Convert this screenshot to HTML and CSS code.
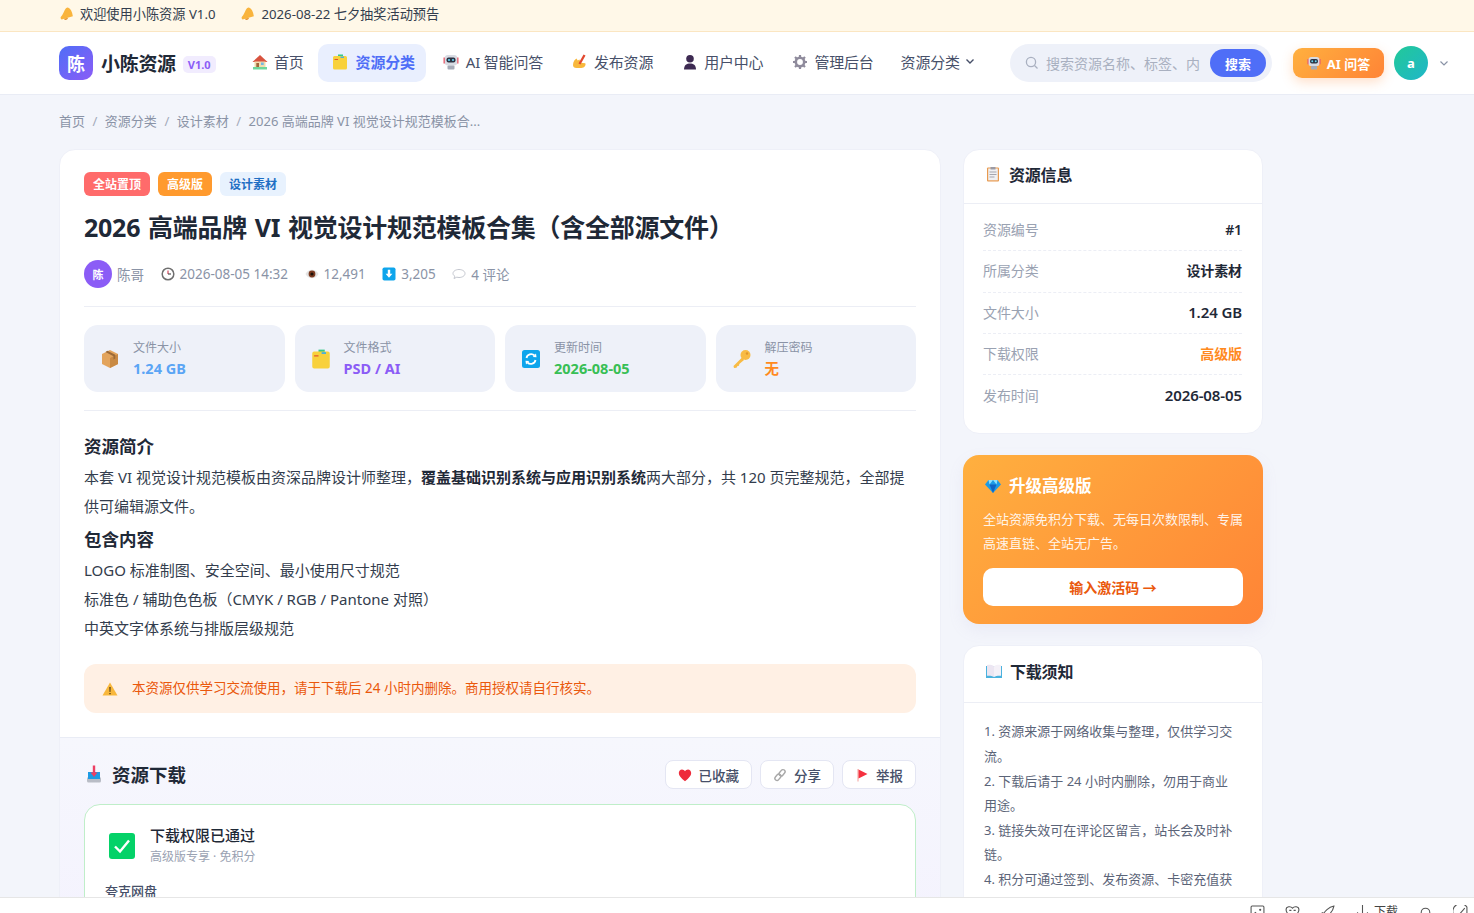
FILE: index.html
```html
<!DOCTYPE html>
<html lang="zh-CN">
<head>
    <meta charset="UTF-8">
    <meta name="viewport" content="width=device-width, initial-scale=1.0">
    <title>2026 高端品牌 VI 视觉设计规范模板合集 - 小陈资源</title>
    <link rel="stylesheet" href="styles.css">
</head>
<body>
    <svg class="sprite" aria-hidden="true">
        <symbol id="i-bell" viewBox="0 0 16 16">
            <path d="M9.500.8c2.600 1 4.400 4.400 5.200 9.800L1.800 14.200c-1.200-1.100-1.500-2.100-.7-3.100 2.200-1.900 2.900-4.900 4.200-7.300C6.200 2 7.800.2 9.500.8z" fill="#f9b43c"/>
            <path d="M4.500 13.500c.7 2.100 3.700 2.100 4.800-1.100z" fill="#e8942a"/>
        </symbol>
        <symbol id="i-folder" viewBox="0 0 16 16">
            <path d="M6 .5h5v3H6z" fill="#35c98a"/>
            <path d="M2.500 2h11A1.500 1.500 0 0 1 15 3.500v10.500a1.500 1.500 0 0 1-1.500 1.500h-11A1.500 1.500 0 0 1 1 14V3.500A1.500 1.500 0 0 1 2.500 2z" fill="#f8d13c"/>
            <path d="M2.500 5h3.500v1H2.500z" fill="#e2562f"/>
            <path d="M8.500 2.500h3.500v1.500H8.500z" fill="#4cb0d8"/>
        </symbol>
        <symbol id="i-robot" viewBox="0 0 16 16">
            <path d="M.5 3.500h2v6h-2zM13.500 3.500h2v6h-2z" fill="#e8596a"/>
            <rect x="1.800" y="1" width="12.400" height="10.500" rx="3" fill="#d8dbe3"/>
            <rect x="3.500" y="3.500" width="9" height="5" rx="2" fill="#2c3444"/>
            <circle cx="6" cy="6" r="1.100" fill="#67d4f2"/><circle cx="10" cy="6" r="1.100" fill="#67d4f2"/>
            <rect x="4.500" y="11.500" width="7" height="4" rx="1" fill="#a6abb8"/>
        </symbol>
    </svg>

    <div class="notice-bar">
        <span class="notice-item"><svg class="ico ico-14"><use href="#i-bell"/></svg>欢迎使用小陈资源 V1.0</span>
        <span class="notice-item"><svg class="ico ico-14"><use href="#i-bell"/></svg>2026-08-22 七夕抽奖活动预告</span>
    </div>

    <header class="site-header">
        <a class="brand">
            <span class="brand-logo">陈</span>
            <span class="brand-name">小陈资源</span>
            <span class="brand-version">V1.0</span>
        </a>
        <nav class="nav">
            <a class="nav-link">
                <svg class="ico" viewBox="0 0 16 16"><path d="M8 1 .5 8h15z" fill="#d8533f"/><path d="M2.500 7.500h11V13h-11z" fill="#f2dcae"/><path d="M1 13h14v2.500H1z" fill="#6fd69a"/><path d="M4.300 9h2.700v4H4.300z" fill="#a0683a"/><path d="M9 8.500h2.700V11H9z" fill="#74b8e0"/></svg>
                首页
            </a>
            <a class="nav-link active"><svg class="ico"><use href="#i-folder"/></svg>资源分类</a>
            <a class="nav-link nav-ai"><svg class="ico"><use href="#i-robot"/></svg>AI 智能问答</a>
            <a class="nav-link">
                <svg class="ico" viewBox="0 0 16 16"><path d="M1 11c0-3.500 1.800-5.500 3.500-6.500l1.200 2 1.800-1 1 3.200 4.800.6c.9 1.800-.7 4.700-4 4.700H4.500C2.200 14 1 13 1 11z" fill="#f8b83c"/><path d="M6.500 9.500 11.500.5l2 1L8.500 10.500z" fill="#e2482f"/></svg>
                发布资源
            </a>
            <a class="nav-link">
                <svg class="ico" viewBox="0 0 16 16"><circle cx="8" cy="4.800" r="3.800" fill="#3d2a52"/><path d="M2 15.500c0-4.500 2.800-6 6-6s6 1.500 6 6z" fill="#3d2a52"/></svg>
                用户中心
            </a>
            <a class="nav-link">
                <svg class="ico" viewBox="0 0 16 16"><circle cx="8" cy="8" r="4.200" fill="none" stroke="#8f8b9c" stroke-width="2.600"/><path d="M8 1v2.500M8 12.500V15M1 8h2.500M12.500 8H15M3 3l1.800 1.800M11.200 11.200 13 13M13 3l-1.800 1.800M4.800 11.200 3 13" stroke="#8f8b9c" stroke-width="2.200"/></svg>
                管理后台
            </a>
            <a class="nav-link nav-more">资源分类<svg class="chevron" viewBox="0 0 10 10"><path d="M1.500 3.500 5 7l3.500-3.500" fill="none" stroke="#475069" stroke-width="1.400"/></svg></a>
        </nav>
        <form class="search">
            <svg class="search-icon" viewBox="0 0 14 14"><circle cx="6" cy="6" r="4.600" fill="none" stroke="#a9b0c0" stroke-width="1.300"/><path d="m9.500 9.500 3 3" stroke="#a9b0c0" stroke-width="1.300"/></svg>
            <input class="search-input" type="text" placeholder="搜索资源名称、标签、内容">
            <button class="search-btn" type="button">搜索</button>
        </form>
        <a class="ai-btn"><svg class="ico ico-14"><use href="#i-robot"/></svg>AI 问答</a>
        <span class="avatar">a</span>
        <svg class="chevron user-chevron" viewBox="0 0 10 10"><path d="M1.500 3.500 5 7l3.500-3.500" fill="none" stroke="#8a93a6" stroke-width="1.200"/></svg>
    </header>

    <div class="page">
        <div class="crumbs">
            <a>首页</a><i>/</i><a>资源分类</a><i>/</i><a>设计素材</a><i>/</i><span>2026 高端品牌 VI 视觉设计规范模板合...</span>
        </div>

        <div class="layout">
            <main class="card article">
                <div class="article-body">
                    <div class="tags">
                        <span class="tag tag-red">全站置顶</span>
                        <span class="tag tag-orange">高级版</span>
                        <span class="tag tag-blue">设计素材</span>
                    </div>
                    <h1 class="title">2026 高端品牌 VI 视觉设计规范模板合集（含全部源文件）</h1>
                    <div class="meta">
                        <span class="meta-item author"><span class="author-avatar">陈</span>陈哥</span>
                        <span class="meta-item">
                            <svg class="ico ico-14" viewBox="0 0 14 14"><circle cx="7" cy="7" r="5.800" fill="#fff" stroke="#6f6f6f" stroke-width="1.500"/><path d="M7 3.500V7" stroke="#d0374f" stroke-width="1.100"/><path d="M7 7h3" stroke="#444" stroke-width="1.100"/></svg>
                            2026-08-05 14:32
                        </span>
                        <span class="meta-item">
                            <svg class="ico ico-14" viewBox="0 0 14 14"><path d="M.5 7C2 4 4.500 2.800 7 2.800S12 4 13.500 7C12 10 9.500 11.200 7 11.200S2 10 .5 7z" fill="#e4e4e4"/><circle cx="7" cy="7" r="3.400" fill="#7a3a20"/><circle cx="7" cy="7" r="1.600" fill="#1c1008"/></svg>
                            12,491
                        </span>
                        <span class="meta-item">
                            <svg class="ico ico-14" viewBox="0 0 14 14"><rect x=".5" y=".5" width="13" height="13" rx="1.800" fill="#0ea5ec"/><path d="M5.800 2.800h2.400v4h2.200L7 10.800 3.600 6.800h2.200z" fill="#fff"/></svg>
                            3,205
                        </span>
                        <span class="meta-item">
                            <svg class="ico ico-14" viewBox="0 0 14 14"><path d="M7 2.500c3.300 0 6 1.700 6 4s-2.700 4-6 4c-.8 0-1.500-.1-2.200-.3L2 11.500l.8-2.300C1.700 8.500 1 7.600 1 6.500c0-2.300 2.700-4 6-4z" fill="#fff" stroke="#c4c7cf"/></svg>
                            4 评论
                        </span>
                    </div>

                    <div class="stats">
                        <div class="stat">
                            <svg class="stat-icon" viewBox="0 0 20 20"><path d="M10 1 18 5v10l-8 4-8-4V5z" fill="#e3a45c"/><path d="M10 9 18 5v10l-8 4z" fill="#c98a44"/><path d="m5.500 3 8 4.200v3.300l1.800-.9V5.700l-8-4z" fill="#9c6a38"/></svg>
                            <div><div class="stat-label">文件大小</div><div class="stat-value c-blue">1.24 GB</div></div>
                        </div>
                        <div class="stat">
                            <svg class="stat-icon"><use href="#i-folder"/></svg>
                            <div><div class="stat-label">文件格式</div><div class="stat-value c-purple">PSD / AI</div></div>
                        </div>
                        <div class="stat">
                            <svg class="stat-icon" viewBox="0 0 20 20"><rect x="1" y="1" width="18" height="18" rx="2.500" fill="#0ea5ec"/><path d="M5.500 9A4.700 4.700 0 0 1 13.500 6.500M14.500 11a4.700 4.700 0 0 1-8 2.500" fill="none" stroke="#fff" stroke-width="1.800"/><path d="m11.800 8 3.700.2-.5-3.700zM8.200 12l-3.700-.2.500 3.700z" fill="#fff"/></svg>
                            <div><div class="stat-label">更新时间</div><div class="stat-value c-green">2026-08-05</div></div>
                        </div>
                        <div class="stat">
                            <svg class="stat-icon" viewBox="0 0 20 20"><circle cx="13.500" cy="6" r="5" fill="#f8bb45"/><circle cx="15" cy="4.500" r="1.200" fill="#e0952b"/><path d="M10.500 8 1.500 17l.5 2 2.500-.3 1-1.700 1.500-.3.300-1.700L12 11z" fill="#f8bb45"/></svg>
                            <div><div class="stat-label">解压密码</div><div class="stat-value c-orange">无</div></div>
                        </div>
                    </div>

                    <div class="content">
                        <h2>资源简介</h2>
                        <p>本套 VI 视觉设计规范模板由资深品牌设计师整理，<strong>覆盖基础识别系统与应用识别系统</strong>两大部分，共 120 页完整规范，全部提供可编辑源文件。</p>
                        <h2>包含内容</h2>
                        <p>LOGO 标准制图、安全空间、最小使用尺寸规范</p>
                        <p>标准色 / 辅助色色板（CMYK / RGB / Pantone 对照）</p>
                        <p>中英文字体系统与排版层级规范</p>
                    </div>

                    <div class="warning">
                        <svg class="ico" viewBox="0 0 16 16"><path d="M8 1.500 15.500 14.500H.5z" fill="#f8b73c"/><path d="M7.400 6h1.200l-.2 5h-.8zM7.400 12h1.200v1.200H7.400z" fill="#3a2a10"/></svg>
                        本资源仅供学习交流使用，请于下载后 24 小时内删除。商用授权请自行核实。
                    </div>
                </div>

                <section class="download">
                    <div class="download-head">
                        <h2 class="download-title">
                            <svg class="ico ico-18" viewBox="0 0 18 18"><rect x="2" y="12" width="14" height="5.500" rx="1.500" fill="#b9bdc6"/><path d="M3 7h12v7H3z" fill="#1d9be4"/><path d="M7.800.5h2.400v7h2.300L9 12 5.500 7.500h2.300z" fill="#ec3f63"/></svg>
                            资源下载
                        </h2>
                        <div class="actions">
                            <button class="action-btn"><svg class="ico ico-14" viewBox="0 0 14 14"><path d="M7 13.300C2.800 10 .8 7.700.8 5.100.8 3 2.300 1.500 4 1.500c1.300 0 2.300.7 3 1.800.7-1.100 1.700-1.800 3-1.800 1.700 0 3.200 1.500 3.200 3.600 0 2.600-2 4.900-6.200 8.200z" fill="#ee2b3b"/></svg>已收藏</button>
                            <button class="action-btn"><svg class="ico ico-14" viewBox="0 0 14 14"><g fill="none" stroke="#a8a8a8" stroke-width="1.400"><rect x="7" y="1.200" width="4.200" height="7" rx="2.100" transform="rotate(40 9 4.700)"/><rect x="2.800" y="5.800" width="4.200" height="7" rx="2.100" transform="rotate(40 5 9.300)"/></g></svg>分享</button>
                            <button class="action-btn"><svg class="ico ico-14" viewBox="0 0 14 14"><path d="M2.500 1h1v12.500h-1z" fill="#f4a09a"/><path d="M3.500 1.500 12.500 6l-9 4.500z" fill="#f5313f"/></svg>举报</button>
                        </div>
                    </div>
                    <div class="permit">
                        <div class="permit-head">
                            <svg class="permit-icon" viewBox="0 0 26 26"><rect width="26" height="26" rx="3" fill="#04d268"/><path d="m6 13.500 5 5 9-11" fill="none" stroke="#fff" stroke-width="2.400"/></svg>
                            <div>
                                <div class="permit-title">下载权限已通过</div>
                                <div class="permit-sub">高级版专享 · 免积分</div>
                            </div>
                        </div>
                        <div class="disk-name">夸克网盘</div>
                    </div>
                </section>
            </main>

            <aside class="sidebar">
                <section class="card">
                    <h3 class="side-title">
                        <svg class="ico" viewBox="0 0 16 16"><rect x="2" y="1.500" width="12" height="14" rx="1" fill="#e89a50"/><rect x="3.200" y="2.500" width="9.600" height="11.800" fill="#f0f0f2"/><path d="M5.500 1h5v2.500h-5z" fill="#9b9ba5"/><path d="M4.500 6h7M4.500 8.500h7M4.500 11h5" stroke="#a5a5ad"/></svg>
                        资源信息
                    </h3>
                    <div class="info-list">
                        <div class="info-row"><span>资源编号</span><b>#1</b></div>
                        <div class="info-row"><span>所属分类</span><b>设计素材</b></div>
                        <div class="info-row"><span>文件大小</span><b class="num">1.24 GB</b></div>
                        <div class="info-row"><span>下载权限</span><b class="c-orange">高级版</b></div>
                        <div class="info-row"><span>发布时间</span><b class="num">2026-08-05</b></div>
                    </div>
                </section>

                <section class="upgrade">
                    <h3 class="upgrade-title">
                        <svg class="ico ico-18" viewBox="0 0 18 18"><path d="M4.500 3h9L17 7.500 9 16 1 7.500z" fill="#1c9be6"/><path d="M5.500 7.500h7L9 16z" fill="#0f63c4"/><path d="M4.500 3 5.500 7.500 9 3zM13.500 3 12.500 7.500 9 3z" fill="#8fe0fa"/></svg>
                        升级高级版
                    </h3>
                    <p class="upgrade-text">全站资源免积分下载、无每日次数限制、专属高速直链、全站无广告。</p>
                    <a class="upgrade-btn">输入激活码 →</a>
                </section>

                <section class="card">
                    <h3 class="side-title side-title-tall">
                        <svg class="ico ico-18" viewBox="0 0 18 18"><path d="M1 4h16v12H1z" fill="#4bb2de"/><path d="M2 3c2.500-.5 5 0 7 1.200V15c-2-1.200-4.500-1.600-7-1.200z" fill="#ece6f2"/><path d="M16 3c-2.500-.5-5 0-7 1.200V15c2-1.200 4.500-1.600 7-1.200z" fill="#f5f1f8"/></svg>
                        下载须知
                    </h3>
                    <ol class="rules">
                        <li>1. 资源来源于网络收集与整理，仅供学习交流。</li>
                        <li>2. 下载后请于 24 小时内删除，勿用于商业用途。</li>
                        <li>3. 链接失效可在评论区留言，站长会及时补链。</li>
                        <li>4. 积分可通过签到、发布资源、卡密充值获取。</li>
                    </ol>
                </section>
            </aside>
        </div>
    </div>

    <div class="bottom-bar">
        <svg class="bar-icon" viewBox="0 0 14 14"><rect x="1" y="1" width="12" height="12" rx="1" fill="none" stroke="#555"/><circle cx="9.500" cy="4.500" r="1" fill="#555"/><path d="m2 10 3-3 3 3" fill="none" stroke="#555"/></svg>
        <svg class="bar-icon" viewBox="0 0 14 14"><path d="M7 3C5.500 1 1 1 1 4.500 1 7.500 4 10 7 13c3-3 6-5.500 6-8.500C13 1 8.500 1 7 3zM4 5h2M8 5h2" fill="none" stroke="#555"/></svg>
        <svg class="bar-icon" viewBox="0 0 14 14"><path d="M13 1C8 2 4 6 3 9l2 2c3-1 7-5 8-10zM1 8l2-1M6 13l1-2" fill="none" stroke="#555"/></svg>
        <span class="bar-download"><svg class="bar-icon" viewBox="0 0 14 14"><path d="M7 0v11M2 7l5 5 5-5" fill="none" stroke="#555"/></svg>下载</span>
        <svg class="bar-icon" viewBox="0 0 14 14"><path d="M3 7a4 4 0 0 1 8 0v2H3zM1 9h12M2 12h10" fill="none" stroke="#555"/></svg>
        <svg class="bar-icon" viewBox="0 0 14 14"><path d="M1 10a6 6 0 0 1 12-8v11H1zM3 12 11 3" fill="none" stroke="#555"/></svg>
    </div>
</body>
</html>
```

FILE: styles.css
```css
* {
    margin: 0;
    padding: 0;
    box-sizing: border-box;
}

html, body {
    height: 100%;
    overflow: hidden;
}

body {
    background: #f3f5fb;
    color: #1f2937;
    font-family: "Noto Sans", "Noto Sans CJK SC", sans-serif;
    font-size: 14px;
}

.sprite {
    position: absolute;
    width: 0;
    height: 0;
}

.ico {
    width: 16px;
    height: 16px;
    flex: none;
}

.ico-14 {
    width: 14px;
    height: 14px;
}

.ico-18 {
    width: 18px;
    height: 18px;
}

/* top notice */
.notice-bar {
    height: 32px;
    padding: 0 0 4px 60px;
    display: flex;
    align-items: center;
    gap: 26px;
    background: #fff8e8;
    border-bottom: 1px solid #fbe6c2;
    font-size: 13.2px;
    color: #333d4d;
}

.notice-item {
    display: flex;
    align-items: center;
    gap: 6px;
}

/* header */
.site-header {
    height: 63px;
    padding-left: 59px;
    display: flex;
    align-items: center;
    background: #fff;
    border-bottom: 1px solid #e9ecf5;
}

.brand {
    display: flex;
    align-items: center;
    width: 179px;
    flex: none;
}

.brand-logo {
    width: 34px;
    height: 34px;
    margin-right: 8px;
    display: flex;
    align-items: center;
    justify-content: center;
    border-radius: 10px;
    background: linear-gradient(135deg, #4f6ef7, #8b5cf6);
    color: #fff;
    font-size: 18px;
    font-weight: 700;
}

.brand-name {
    font-size: 19px;
    font-weight: 700;
    color: #1f2937;
    letter-spacing: -0.3px;
}

.brand-version {
    margin: 3px 0 0 7px;
    padding: 0 5px;
    height: 17px;
    line-height: 17px;
    border-radius: 5px;
    background: #f1ecfe;
    color: #8b5cf6;
    font-size: 11px;
    font-weight: 700;
}

.nav {
    display: flex;
    align-items: center;
    gap: 3px;
    width: 772px;
    flex: none;
}

.nav-link {
    height: 38px;
    padding: 0 12px 4px;
    display: flex;
    align-items: center;
    gap: 4px;
    border-radius: 10px;
    color: #475069;
    font-size: 15px;
    letter-spacing: -0.2px;
    white-space: nowrap;
}

.nav-link .ico {
    margin: 2px 2px 0;
}

.nav-link.active {
    margin-left: -1px;
    padding-right: 11px;
    gap: 6px;
    background: #e9effe;
    color: #4f6ef7;
    font-weight: 600;
}

.nav-ai {
    gap: 5px;
}

.chevron {
    width: 10px;
    height: 10px;
    flex: none;
}

.nav-more {
    gap: 5px;
}

.search {
    width: 262px;
    height: 38px;
    padding: 0 6px 0 15px;
    display: flex;
    align-items: center;
    border-radius: 19px;
    background: #eef1f9;
    flex: none;
}

.search-icon {
    width: 14px;
    height: 14px;
    margin-right: 7px;
    flex: none;
}

.search-input {
    width: 154px;
    border: none;
    outline: none;
    background: transparent;
    font-family: inherit;
    font-size: 14px;
    margin-right: 10px;
}

.search-input::placeholder {
    color: #a9b0c0;
}

.search-btn {
    width: 56px;
    height: 28px;
    border: none;
    border-radius: 14px;
    background: #4f6ef7;
    color: #fff;
    font-family: inherit;
    font-size: 13px;
    font-weight: 700;
    flex: none;
}

.ai-btn {
    width: 91px;
    height: 30px;
    margin-left: 21px;
    display: flex;
    align-items: center;
    justify-content: center;
    gap: 6px;
    border-radius: 9px;
    background: linear-gradient(135deg, #ffb03f, #ff8436);
    box-shadow: 0 4px 12px rgba(255, 140, 60, 0.28);
    color: #fff;
    font-size: 13px;
    font-weight: 700;
    flex: none;
}

.avatar {
    width: 34px;
    height: 34px;
    margin-left: 10px;
    display: flex;
    align-items: center;
    justify-content: center;
    border-radius: 50%;
    background: linear-gradient(135deg, #22c998, #1fb6c9);
    color: #fff;
    font-size: 13px;
    font-weight: 700;
    flex: none;
}

.user-chevron {
    margin-left: 11px;
}

/* page */
.page {
    padding: 0 59px;
}

.crumbs {
    height: 54px;
    padding-bottom: 3px;
    display: flex;
    align-items: center;
    gap: 7.5px;
    color: #8a93a6;
    font-size: 13px;
}

.crumbs i {
    font-style: normal;
    color: #a3aaba;
}

.layout {
    width: 1204px;
    display: grid;
    grid-template-columns: 882px 300px;
    gap: 22px;
    align-items: start;
}

.card {
    background: #fff;
    border: 1px solid #eef0f8;
    border-radius: 16px;
    overflow: hidden;
}

.article-body {
    padding: 22px 24px 24px;
}

/* tags and title */
.tags {
    display: flex;
    gap: 8px;
}

.tag {
    height: 24px;
    padding: 0 9px;
    display: flex;
    align-items: center;
    border-radius: 6px;
    font-size: 12px;
    font-weight: 700;
}

.tag-red {
    background: #ff6b6b;
    color: #fff;
}

.tag-orange {
    background: #ff9a2e;
    color: #fff;
}

.tag-blue {
    background: #e8f2fe;
    color: #1f6fc4;
}

.title {
    margin-top: 13px;
    font-size: 25px;
    line-height: 36px;
    font-weight: 700;
    color: #1f2937;
    letter-spacing: -0.25px;
    word-spacing: 1.5px;
    white-space: nowrap;
}

.meta {
    margin-top: 15px;
    padding-bottom: 18px;
    display: flex;
    align-items: center;
    gap: 16.5px;
    color: #8a93a6;
    font-size: 13.5px;
    border-bottom: 1px solid #eceef5;
}

.meta-item {
    display: flex;
    align-items: center;
    gap: 5px;
}

.author-avatar {
    width: 28px;
    height: 28px;
    display: flex;
    align-items: center;
    justify-content: center;
    border-radius: 50%;
    background: #8b5cf6;
    color: #fff;
    font-size: 11px;
    font-weight: 700;
}

/* stats */
.stats {
    padding: 18px 0;
    display: grid;
    grid-template-columns: repeat(4, 1fr);
    gap: 10px;
    border-bottom: 1px solid #eceef5;
}

.stat {
    height: 67px;
    padding-left: 16px;
    display: flex;
    align-items: center;
    gap: 13px;
    border-radius: 14px;
    background: #eef1f9;
}

.stat-icon {
    width: 20px;
    height: 20px;
    flex: none;
}

.stat-label {
    color: #8a93a6;
    font-size: 12px;
    line-height: 18px;
}

.stat-value {
    margin-top: 2px;
    font-size: 14.5px;
    line-height: 19px;
    font-weight: 700;
}

.c-blue {
    color: #5aa5f5;
}

.c-purple {
    color: #8b5cf6;
}

.c-green {
    color: #38bf55;
}

.c-orange {
    color: #ff8a1e;
}

/* body text */
.content {
    margin-top: 20px;
    font-size: 15px;
    line-height: 29px;
    color: #333d4d;
}

.content h2 {
    font-size: 17.5px;
    line-height: 31px;
    padding-bottom: 1px;
    font-weight: 700;
    color: #1f2937;
}

.content p + h2 {
    margin-top: 3px;
}

.content strong {
    color: #1f2937;
}

.warning {
    height: 49px;
    margin-top: 21px;
    padding: 0 0 3px 18px;
    display: flex;
    align-items: center;
    gap: 14px;
    border-radius: 12px;
    background: #fff0e4;
    color: #ea580c;
    font-size: 13.5px;
}

.warning .ico {
    margin-top: 3px;
}

/* download */
.download {
    padding: 22px 24px 24px;
    background: linear-gradient(180deg, #f6f7fd, #f4f2fe);
    border-top: 1px solid #e9ecf5;
}

.download-head {
    display: flex;
    align-items: center;
    justify-content: space-between;
}

.download-title {
    padding-bottom: 2px;
    display: flex;
    align-items: center;
    gap: 9px;
    font-size: 18.5px;
    font-weight: 700;
    color: #1f2937;
}

.download-title .ico {
    margin-left: 1px;
}

.actions {
    display: flex;
    gap: 8px;
}

.action-btn {
    height: 29px;
    padding: 0 12px;
    display: flex;
    align-items: center;
    gap: 7px;
    border: 1px solid #e4e6f3;
    border-radius: 8px;
    background: #fff;
    color: #475069;
    font-family: inherit;
    font-size: 13.5px;
    font-weight: 500;
}

.permit {
    margin-top: 15px;
    padding: 20px;
    background: #fff;
    border: 1px solid #bfeec9;
    border-radius: 16px;
}

.permit-head {
    padding-left: 4px;
    display: flex;
    align-items: center;
    gap: 15px;
}

.permit-icon {
    width: 26px;
    height: 26px;
    flex: none;
}

.permit-title {
    font-size: 15px;
    line-height: 20px;
    font-weight: 500;
    color: #1f2937;
}

.permit-sub {
    margin-top: 3px;
    font-size: 12px;
    line-height: 18px;
    color: #9aa2b2;
}

.disk-name {
    margin-top: 15px;
    font-size: 13px;
    line-height: 20px;
    font-weight: 500;
    color: #475069;
}

/* sidebar */
.sidebar {
    display: flex;
    flex-direction: column;
    gap: 21px;
}

.side-title {
    height: 54px;
    padding: 0 0 6px 21px;
    display: flex;
    align-items: center;
    gap: 8px;
    border-bottom: 1px solid #eceef5;
    font-size: 16px;
    font-weight: 700;
    color: #1f2937;
    letter-spacing: -0.2px;
}

.side-title-tall {
    height: 57px;
    padding-bottom: 6px;
    gap: 7px;
}

.info-list {
    padding: 6px 20px 17px 19px;
}

.info-row {
    height: 41.3px;
    padding-bottom: 2px;
    display: flex;
    align-items: center;
    justify-content: space-between;
    border-bottom: 1px dashed #eceef5;
    font-size: 14px;
    letter-spacing: -0.1px;
}

.info-row:last-child {
    border-bottom: none;
}

.info-row span {
    color: #9aa2b2;
}

.info-row b {
    font-size: 14px;
    font-weight: 600;
}

.info-row b.num {
    font-size: 15px;
}

.upgrade {
    height: 169px;
    padding: 19px 20px;
    border-radius: 16px;
    background: linear-gradient(135deg, #ffb03f, #ff8436);
    box-shadow: 0 6px 16px rgba(160, 150, 200, 0.1);
    color: #fff;
}

.upgrade-title {
    display: flex;
    align-items: center;
    gap: 7px;
    font-size: 16.5px;
    line-height: 24px;
    font-weight: 700;
}

.upgrade-title .ico {
    margin-left: 1px;
}

.upgrade-text {
    margin-top: 9px;
    font-size: 13px;
    line-height: 24px;
    color: rgba(255, 255, 255, 0.9);
}

.upgrade-btn {
    height: 38px;
    margin-top: 13px;
    display: flex;
    align-items: center;
    justify-content: center;
    border-radius: 10px;
    background: #fff;
    color: #ea580c;
    font-size: 14px;
    font-weight: 700;
}

.rules {
    list-style: none;
    padding: 16px 26px 18px 20px;
    font-size: 13px;
    line-height: 24.6px;
    color: #5b6478;
}

/* strip at the bottom of the window */
.bottom-bar {
    position: fixed;
    left: 0;
    right: 0;
    bottom: 0;
    height: 16px;
    padding: 7px 6px 0 0;
    display: flex;
    justify-content: flex-end;
    gap: 20px;
    overflow: hidden;
    background: #fff;
    border-top: 1px solid #e6e6e6;
    color: #444;
    font-size: 12px;
    line-height: 14px;
}

.bar-icon {
    width: 15px;
    height: 15px;
    flex: none;
}

.bar-download {
    display: flex;
    gap: 4px;
}
```
